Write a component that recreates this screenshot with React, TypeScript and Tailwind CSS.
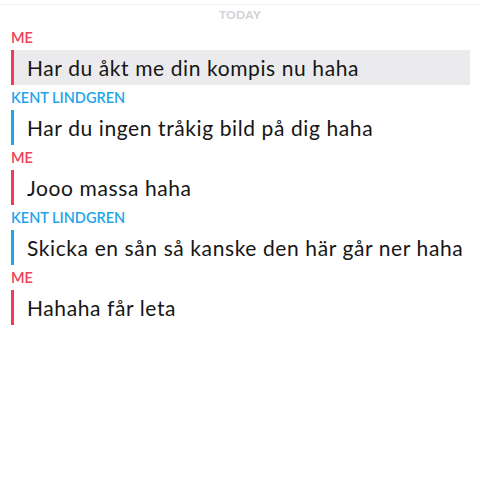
import React from "react";

type Msg = { from: "me" | "kent"; text: string; selected?: boolean };

const messages: Msg[] = [
  { from: "me", text: "Har du åkt me din kompis nu haha", selected: true },
  { from: "kent", text: "Har du ingen tråkig bild på dig haha" },
  { from: "me", text: "Jooo massa haha" },
  { from: "kent", text: "Skicka en sån så kanske den här går ner haha" },
  { from: "me", text: "Hahaha får leta" },
];

const font = { fontFamily: "Lato, 'Open Sans', sans-serif" };

const App = () => {
  return (
    <div className="w-[480px] h-[480px] bg-white overflow-hidden" style={font}>
      <div className="h-[5px] border-b border-[#f2f2f2]" />
      <div className="h-[20px] flex items-center justify-center text-[12px] font-bold tracking-[0.3px] text-[#cfd2d7]">
        TODAY
      </div>
      <div className="flex flex-col pl-[10px] pr-[10px]">
        {messages.map((m, i) => {
          const me = m.from === "me";
          return (
            <div key={i} className="flex flex-col">
              <div
                className={`h-[25px] flex items-center pl-px pt-px text-[14.5px] font-semibold ${me ? "text-[#f23c57]" : "text-[#1ea5ec]"}`}
              >
                {me ? "ME" : "KENT LINDGREN"}
              </div>
              <div className="flex h-[35px]">
                <div className={`w-[3px] ml-px ${me ? "bg-[#f23c57]" : "bg-[#1ea5ec]"}`} />
                <div
                  className={`flex-1 flex items-center pl-[13px] text-[21px] tracking-[0.6px] text-[#161616] whitespace-nowrap ${m.selected ? "bg-[#ebebed]" : ""}`}
                >
                  {m.text}
                </div>
              </div>
            </div>
          );
        })}
      </div>
    </div>
  );
};

export default App;
